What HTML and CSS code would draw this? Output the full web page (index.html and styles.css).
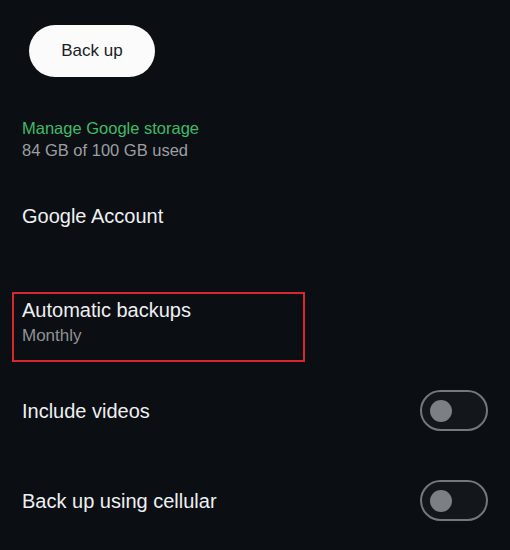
FILE: index.html
```html
<!DOCTYPE html>
<html lang="en">
<head>
    <meta charset="UTF-8">
    <meta name="viewport" content="width=device-width, initial-scale=1.0">
    <title>Backup</title>
    <link rel="stylesheet" href="styles.css">
</head>
<body>

    <div class="page">
        <button class="backup-btn">Back up</button>

        <div class="storage">
            <div class="storage-link">Manage Google storage</div>
            <div class="storage-used">84 GB of 100 GB used</div>
        </div>

        <div class="account">Google Account</div>

        <div class="setting highlighted">
            <div class="setting-title">Automatic backups</div>
            <div class="setting-value">Monthly</div>
        </div>

        <div class="toggle-row first">
            <div class="setting-title">Include videos</div>
            <div class="toggle"><span class="knob"></span></div>
        </div>

        <div class="toggle-row">
            <div class="setting-title">Back up using cellular</div>
            <div class="toggle"><span class="knob"></span></div>
        </div>
    </div>

</body>
</html>
```

FILE: styles.css
```css
body {
    font-family: "Liberation Sans", Arial, sans-serif;
    background-color: #0b0e12;
    color: #eef0f2;
    margin: 0;
    padding: 0;
}
.page {
    padding: 25px 22px 0;
}
.backup-btn {
    display: block;
    width: 126px;
    height: 52px;
    margin-left: 7px;
    background-color: #fbfbfb;
    color: #1a1c1f;
    border: none;
    border-radius: 26px;
    font-family: inherit;
    font-size: 17px;
}
.storage {
    margin-top: 40px;
    font-size: 16.5px;
    line-height: 22px;
}
.storage-link {
    color: #3dbc6a;
}
.storage-used {
    color: #9b9fa4;
}
.account {
    margin-top: 43px;
    font-size: 20px;
    line-height: 24px;
}
.setting-title {
    font-size: 20px;
    line-height: 24px;
}
.setting-value {
    margin-top: 3px;
    font-size: 17px;
    line-height: 22px;
    color: #8e9297;
}
.highlighted {
    width: 273px;
    margin: 64px 0 0 -10px;
    padding: 4px 8px 13px;
    border: 2px solid #d8262e;
}
.toggle-row {
    display: flex;
    justify-content: space-between;
    align-items: center;
    margin-top: 49px;
}
.toggle-row.first {
    margin-top: 28px;
}
.toggle {
    display: flex;
    align-items: center;
    box-sizing: border-box;
    width: 68px;
    height: 41px;
    padding-left: 8px;
    border: 2.5px solid #74787d;
    border-radius: 21px;
    background-color: #13161a;
}
.knob {
    width: 22px;
    height: 22px;
    border-radius: 50%;
    background-color: #7c8085;
}
```
